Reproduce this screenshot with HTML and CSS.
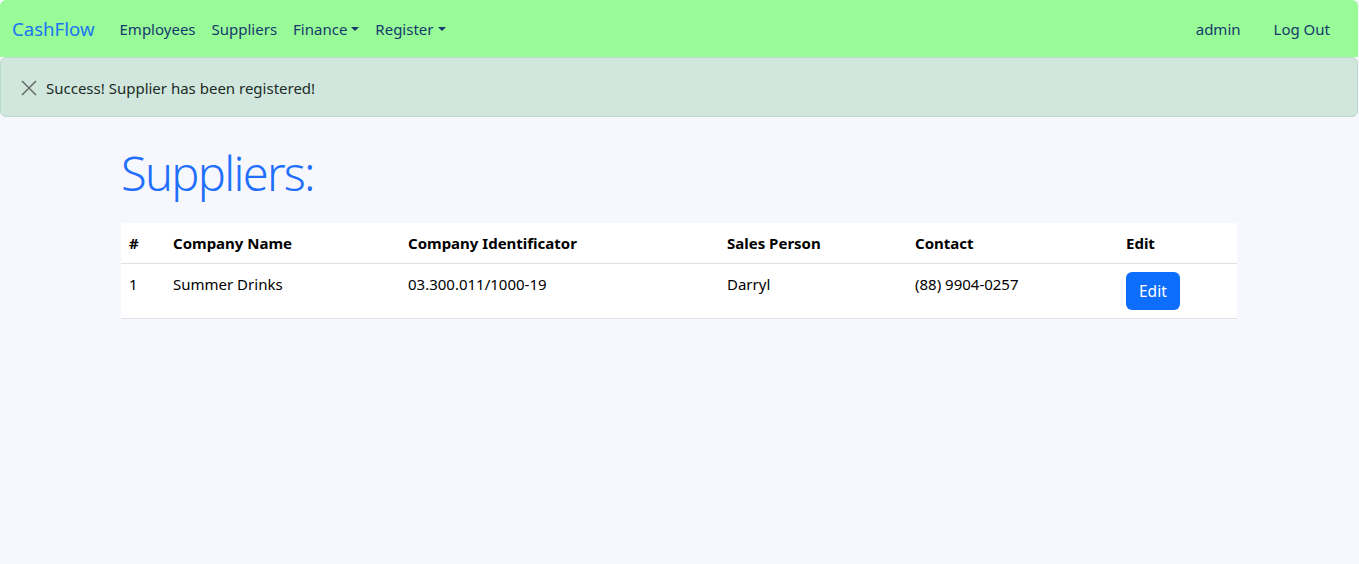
FILE: index.html
```html
<!DOCTYPE html>
<html lang="en">
<head>
<meta charset="utf-8">
<title>CashFlow - Suppliers</title>
<link rel="stylesheet" href="styles.css">
</head>
<body>
<div class="shell">
  <nav class="navbar">
    <a class="brand" href="#">CashFlow</a>
    <ul class="nav-links">
      <li><a href="#">Employees</a></li>
      <li><a href="#">Suppliers</a></li>
      <li><a href="#" class="toggle">Finance</a></li>
      <li><a href="#" class="toggle">Register</a></li>
    </ul>
    <ul class="nav-right">
      <li><a href="#">admin</a></li>
      <li><a href="#">Log Out</a></li>
    </ul>
  </nav>
  <div class="alert">
    <svg class="close" width="16" height="16" viewBox="0 0 16 16"><path d="M1 1 L15 15 M15 1 L1 15" stroke="#6b6f6d" stroke-width="1.6" fill="none"/></svg>
    <span>Success! Supplier has been registered!</span>
  </div>
  <main class="container">
    <h1 class="title">Suppliers:</h1>
    <table class="table">
      <colgroup>
        <col class="c1"><col class="c2"><col class="c3"><col class="c4"><col class="c5"><col class="c6">
      </colgroup>
      <thead>
        <tr><th>#</th><th>Company Name</th><th>Company Identificator</th><th>Sales Person</th><th>Contact</th><th>Edit</th></tr>
      </thead>
      <tbody>
        <tr><td>1</td><td>Summer Drinks</td><td>03.300.011/1000-19</td><td>Darryl</td><td>(88) 9904-0257</td><td><a href="#" class="btn">Edit</a></td></tr>
      </tbody>
    </table>
  </main>
</div>
</body>
</html>
```
FILE: styles.css
```css
* { box-sizing: border-box; }
html, body { margin: 0; padding: 0; }
body {
  background: #f7f8fd;
  font-family: "Noto Sans", "Open Sans", sans-serif;
  font-size: 15px;
  line-height: 24px;
  color: #212529;
  height: 564px;
}
.shell { padding: 0 1px 0 0; }
a { text-decoration: none; }
ul { list-style: none; margin: 0; padding: 0; }

.navbar {
  background: #98fb98;
  border-radius: 6px 6px 0 0;
  height: 57px;
  display: flex;
  align-items: center;
  padding: 0 12px;
}
.brand {
  color: #1a73f5;
  font-size: 18.6px;
  margin-right: 17px;
  line-height: 30px;
}
.nav-links, .nav-right { display: flex; }
.nav-links a, .nav-right a {
  color: #15396b;
  padding: 8px;
  display: flex;
  align-items: center;
}
.nav-right { margin-left: auto; gap: 17px; padding-right: 8px; }
.toggle::after {
  content: "";
  display: inline-block;
  margin-left: 4px;
  border-top: 4.8px solid #15396b;
  border-left: 4.8px solid transparent;
  border-right: 4.8px solid transparent;
}

.alert {
  background: #d1e7dd;
  border: 1px solid #badbcc;
  border-radius: 6px;
  height: 60px;
  display: flex;
  align-items: center;
  padding: 2px 20px 0;
  gap: 9px;
  color: #1c2b26;
}
.close { flex: none; }

.container {
  width: 1140px;
  margin: 0 auto;
  padding: 0 12px;
}
.title {
  font-size: 47px;
  font-weight: 300;
  line-height: 1.2;
  letter-spacing: -1.7px;
  color: #1f6ffc;
  margin: 28px 0 22px;
}
.table {
  width: 100%;
  border-collapse: collapse;
  table-layout: fixed;
  background: #fff;
  color: #000;
}
.c1 { width: 44px; }
.c2 { width: 235px; }
.c3 { width: 319px; }
.c4 { width: 188px; }
.c5 { width: 211px; }
.c6 { width: 119px; }
.table th, .table td {
  padding: 8px;
  text-align: left;
  vertical-align: top;
  border-bottom: 1px solid #dee2e6;
}
.table th { font-weight: 700; }
.btn {
  display: inline-block;
  background: #0d6efd;
  color: #fff;
  border-radius: 6px;
  padding: 7px 13px;
  line-height: 24px;
  font-size: 15.5px;
}
```
